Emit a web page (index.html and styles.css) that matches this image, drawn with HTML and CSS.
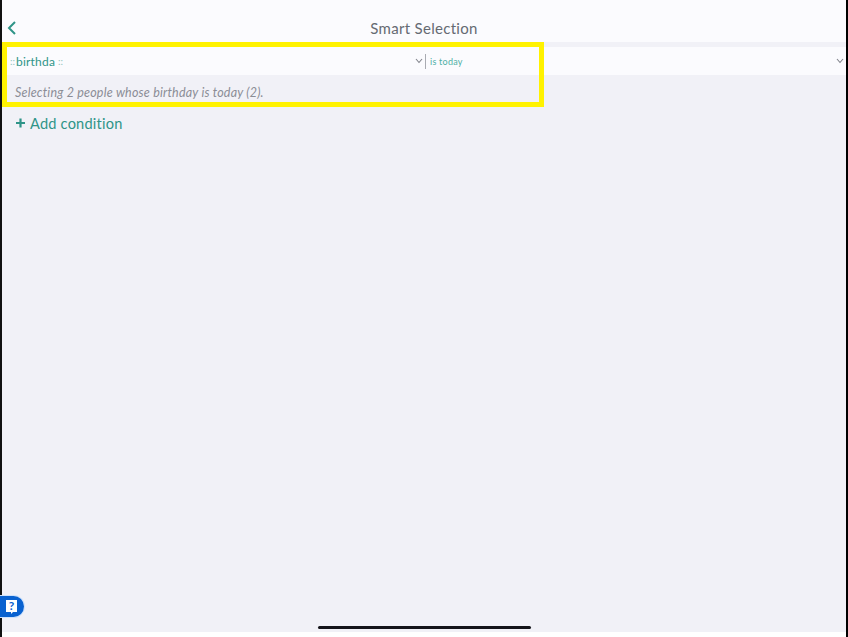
FILE: index.html
```html
<!DOCTYPE html>
<html>
<head>
    <title>Smart Selection</title>
    <link rel="stylesheet" href="styles.css">
</head>
<body>
    <div class="screen">
        <div class="navbar">
            <svg class="back" width="10" height="16" viewBox="0 0 10 16"><path d="M8 2 L2 8 L8 14" fill="none" stroke="#2f9488" stroke-width="2"/></svg>
            <div class="title">Smart Selection</div>
        </div>

        <div class="condition">
            <div class="field field-left">
                <span class="token">::</span><span class="field-name">birthda</span><span class="token token-end">::</span>
                <svg class="chevron" width="8" height="6" viewBox="0 0 8 6"><path d="M1 1 L4 4.5 L7 1" fill="none" stroke="#80838b" stroke-width="1.1"/></svg>
            </div>
            <div class="divider"></div>
            <div class="field field-right">
                <span class="operator">is today</span>
                <svg class="chevron" width="8" height="6" viewBox="0 0 8 6"><path d="M1 1 L4 4.5 L7 1" fill="none" stroke="#80838b" stroke-width="1.1"/></svg>
            </div>
        </div>
        <div class="summary">Selecting 2 people whose birthday is today (2).</div>

        <div class="add-condition">
            <svg class="plus" width="10" height="10" viewBox="0 0 10 10"><path d="M4.5 0.5 V9.5 M0 5 H9" fill="none" stroke="#2f9488" stroke-width="2.2"/></svg>
            <span>Add condition</span>
        </div>

        <div class="spacer"></div>
        <div class="home-bar"><div class="home-indicator"></div></div>

        <div class="highlight"></div>
        <div class="help">
            <svg width="13" height="16" viewBox="0 0 13 16"><path d="M1 1 H12 V13 H8 L6 15 V13 H1 Z" fill="#fff"/></svg>
            <span class="help-mark">?</span>
        </div>
    </div>
</body>
</html>
```

FILE: styles.css
```css
html, body {
    margin: 0;
    padding: 0;
    height: 637px;
    overflow: hidden;
    background: #fff;
}
.screen {
    position: relative;
    box-sizing: border-box;
    width: 848px;
    height: 637px;
    display: flex;
    flex-direction: column;
    border-left: 2px solid #111;
    border-right: 2px solid #000;
    background: #f1f1f7;
    font-family: "Lato", "Open Sans", sans-serif;
}
.navbar {
    height: 42px;
    flex: none;
    display: flex;
    align-items: center;
    justify-content: center;
    position: relative;
    background: #fbfbfe;
    padding-top: 14px;
    box-sizing: border-box;
}
.back {
    position: absolute;
    left: 5px;
    top: 20px;
}
.title {
    font-size: 15px;
    color: #656a72;
    letter-spacing: 0.3px;
}
.condition {
    margin-top: 5px;
    height: 28px;
    flex: none;
    display: flex;
    align-items: center;
    background: #fbfbfe;
}
.field {
    display: flex;
    align-items: center;
}
.field-left {
    width: 423px;
    padding-left: 8px;
    box-sizing: border-box;
    font-size: 12px;
}
.field-right {
    flex: 1;
    padding-left: 4px;
    padding-right: 2px;
}
.field .chevron {
    margin-left: auto;
}
.field-left .chevron {
    margin-right: 2px;
}
.token {
    color: #8fc2bc;
    font-size: 10px;
}
.token-end {
    margin-left: 3px;
}
.field-name {
    color: #2f9488;
    font-size: 12px;
    letter-spacing: 0.2px;
    margin-left: 1px;
}
.operator {
    color: #4fb0a6;
    font-size: 9px;
    letter-spacing: 0.25px;
}
.divider {
    width: 1px;
    height: 15px;
    background: #a9abb2;
}
.summary {
    height: 27px;
    flex: none;
    padding-left: 13px;
    font-size: 12.5px;
    font-style: italic;
    line-height: 36px;
    color: #8b8d96;
    letter-spacing: 0.2px;
}
.add-condition {
    margin-top: 11px;
    padding-left: 14px;
    height: 20px;
    display: flex;
    align-items: center;
    gap: 4px;
    font-size: 14.6px;
    color: #2f9488;
    letter-spacing: 0.2px;
}
.spacer {
    flex: 1;
}
.home-bar {
    flex: none;
    height: 12px;
    display: flex;
    justify-content: center;
    background: linear-gradient(#f1f1f7 0, #f1f1f7 7px, #fff 7px);
}
.home-indicator {
    width: 213px;
    height: 3px;
    margin-top: 1px;
    background: #14141a;
    border-radius: 2px;
}
.highlight {
    position: absolute;
    left: 0;
    top: 42px;
    box-sizing: border-box;
    width: 542px;
    height: 65px;
    border: 5px solid #fff200;
}
.help {
    position: absolute;
    left: -2px;
    top: 596px;
    width: 24px;
    height: 21px;
    background: #0a62d0;
    border-radius: 0 11px 11px 0;
    box-shadow: 0 0 0 1px #cfe2fb;
}
.help svg {
    position: absolute;
    left: 5px;
    top: 3px;
}
.help-mark {
    position: absolute;
    left: 5px;
    top: 3px;
    width: 13px;
    text-align: center;
    font-size: 12px;
    font-weight: 700;
    color: #0a62d0;
    line-height: 14px;
}
```
